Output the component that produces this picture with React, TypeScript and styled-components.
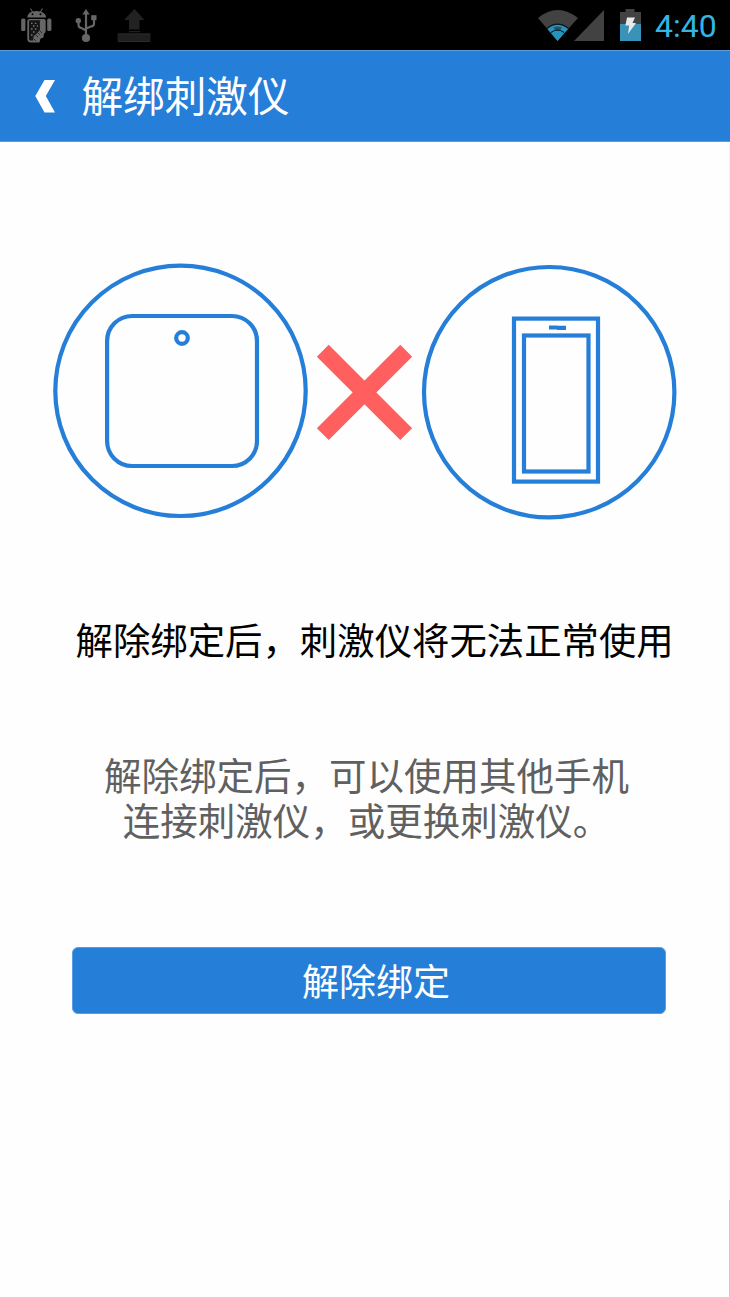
import React from "react";
import styled, { createGlobalStyle } from "styled-components";

const BLUE = "#257ed7";

const GlobalStyle = createGlobalStyle`
  * { box-sizing: border-box; }
  body { margin: 0; background: #fefefe; }
`;

const Screen = styled.div`
  width: 730px;
  height: 1297px;
  overflow: hidden;
  display: flex;
  flex-direction: column;
  background: linear-gradient(#cbcbcb, #cbcbcb) right bottom / 1px 97px no-repeat,
    linear-gradient(#f3f3f3, #f3f3f3) right top / 1px 100% no-repeat, #fefefe;
  font-family: "Noto Sans CJK SC", sans-serif;
`;

const StatusBar = styled.div`
  height: 50px;
  flex: none;
  display: flex;
  justify-content: space-between;
  background: #000;
`;

const StatusGroup = styled.div`
  display: flex;
  svg { display: block; overflow: visible; }
`;

const Clock = styled.span`
  width: 77px;
  padding-left: 2px;
  font-family: Roboto, sans-serif;
  font-size: 32px;
  line-height: 52px;
  white-space: nowrap;
  color: #33b5e5;
`;

const Header = styled.header`
  height: 92px;
  flex: none;
  display: flex;
  align-items: center;
  padding-left: 35px;
  background: ${BLUE};
  border-top: 1px solid #5a9de0;
  border-bottom: 1px solid #5a9de0;
`;

const BackButton = styled.button`
  width: 46.5px;
  height: 34px;
  padding: 0;
  border: 0;
  background: none;
  svg { display: block; }
`;

const Title = styled.h1`
  margin: 0;
  padding-bottom: 4px;
  font-size: 41.6px;
  line-height: 60px;
  font-weight: 400;
  color: #fff;
`;

const Main = styled.main`
  flex: 1;
  display: flex;
  flex-direction: column;
`;

const Illustration = styled.div`
  display: flex;
  padding: 118px 0 0 50px;
  svg { display: block; }
`;

const Warning = styled.p`
  margin: 87px 0 0 75.5px;
  font-size: 37.4px;
  line-height: 60px;
  color: #000;
  white-space: nowrap;
`;

const Hint = styled.p`
  margin: 82px 0 0 3px;
  font-size: 37.5px;
  line-height: 45px;
  text-align: center;
  color: #606060;
`;

const UnbindButton = styled.button`
  width: 594px;
  height: 67px;
  margin: 106px 0 0 72px;
  padding: 0 0 2px 14px;
  border: 1px solid #5a9de0;
  border-radius: 6px;
  background: ${BLUE};
  font-family: inherit;
  font-size: 37px;
  line-height: 60px;
  color: #fff;
`;

const NoticeIcons = () => (
  <svg width="180" height="50" viewBox="0 0 180 50">
    <g fill="#666">
      <path d="M27.3 17.5c0-3 2.1-5 4.6-5.8l-1.8-3 .8-.5 2 3.2q3.6-.8 7.2 0l2-3.2.8.5-1.8 3c2.9 1 5 2.8 5 5.8z" />
      <rect x="21.2" y="18.5" width="4.2" height="12.5" rx="1.6" />
      <rect x="47.2" y="18.5" width="4.2" height="12.5" rx="1.6" />
      <path d="M27.3 21q0-2 2-2h14.4q2 0 2 2v9.8q0 2-1.6 2.6l-.8 4.4-2.8.6-1 4H30q-2.7-.7-2.7-3.5z" />
    </g>
    <circle cx="32.5" cy="14.3" r="1" fill="#000" />
    <circle cx="40.5" cy="14.3" r="1" fill="#000" />
    <path d="M29 21.5q0-1.2 1.2-1.2h10.2q-1 1.7-.5 4.2v5.6l-2.5 3-3.8 3.1-.5 4.4h-2.6q-1.5-.4-1.5-1.9z" fill="#151515" />
    <path d="M31 23.3h6M33 26h5M31 29h6M33 32h2M31 35h3" stroke="#777" strokeWidth="1.3" strokeDasharray="1.5 2.4" />
    <path d="m36 35 2 2m0-4 2 2m0-4 2 2m-8 6 2 2" stroke="#303030" strokeWidth="1" />
    <g fill="none" stroke="#666" strokeWidth="2.2">
      <path d="M86 14v22M78.5 21v4q0 2.6 3 3l4.5 2.5M94 18v6q0 1.8-2.5 2.3L86 28.5" />
    </g>
    <g fill="#666">
      <path d="m86 9 3.7 5.4h-7.4z" />
      <circle cx="78.3" cy="20.7" r="2.7" />
      <rect x="91.2" y="15.2" width="5.3" height="5" />
      <circle cx="86" cy="38" r="4.1" />
    </g>
    <path d="m134.5 9 10 11h-5v9.5H129V20h-5z" fill="#222" />
    <path d="M129 31.7h11" stroke="#292929" strokeWidth="1" />
    <rect x="117.5" y="33.5" width="33" height="8.5" rx="1.2" fill="#1f1f1f" />
    <path d="M118 34h32M118 41.5h32" stroke="#2b2b2b" />
  </svg>
);

const SystemIcons = () => (
  <svg width="108" height="50" viewBox="545 0 108 50">
    <path d="M538 18Q557.5 2 578 18L557.5 41z" fill="#424242" />
    <path d="M547.5 29Q557.5 20.5 568 29L557.5 41z" fill="#2794bd" />
    <path d="M553.5 27.3q4-1.8 8.4 0l-2 3.6h-4.5z" fill="#20566c" />
    <path d="M547 28.3q10.5-8.5 21.5 0M551 32.5q6.5-5 13 0" fill="none" stroke="#071b24" strokeWidth="1.2" />
    <path d="M604 10v31h-30z" fill="#424242" />
    <path d="M620 12h5.5V9h9v3h6.5v12h-21z" fill="#424242" />
    <path d="M620 24h21v17h-21z" fill="#3993b9" />
    <path d="M627 17.5h8l-2.5 5.5h3.5l-8 11 1.2-8.5h-3.8z" fill="#e9e9e9" />
  </svg>
);

const BackIcon = () => (
  <svg width="21" height="34" viewBox="0 0 21 34">
    <path d="M9.5 1H20l-9.2 16L20 33.5H9.5L.3 17z" fill="#fff" />
  </svg>
);

const UnlinkDrawing = () => (
  <svg width="630" height="262" viewBox="50 260 630 262" fill="none">
    <g stroke={BLUE} strokeWidth="4.2">
      <circle cx="180.5" cy="390.8" r="125.2" />
      <rect x="107.1" y="316" width="149.9" height="150" rx="25" />
      <circle cx="182" cy="338" r="5.8" />
      <circle cx="549.2" cy="392.2" r="125.2" />
      <rect x="514" y="318.6" width="84" height="163" />
      <rect x="524" y="335.5" width="64.5" height="136" />
      <path d="M549 327.5h8.5m-.5.3h9" />
    </g>
    <path d="m322.8 350.7 83.4 83.4m0-83.4-83.4 83.4" stroke="#ff5f5f" strokeWidth="16.8" />
  </svg>
);

export default function App() {
  return (
    <>
      <GlobalStyle />
      <Screen>
        <StatusBar>
          <StatusGroup>
            <NoticeIcons />
          </StatusGroup>
          <StatusGroup>
            <SystemIcons />
            <Clock>4:40</Clock>
          </StatusGroup>
        </StatusBar>
        <Header>
          <BackButton aria-label="返回">
            <BackIcon />
          </BackButton>
          <Title>解绑刺激仪</Title>
        </Header>
        <Main>
          <Illustration>
            <UnlinkDrawing />
          </Illustration>
          <Warning>解除绑定后，刺激仪将无法正常使用</Warning>
          <Hint>
            解除绑定后，可以使用其他手机
            <br />
            连接刺激仪，或更换刺激仪。
          </Hint>
          <UnbindButton>解除绑定</UnbindButton>
        </Main>
      </Screen>
    </>
  );
}
